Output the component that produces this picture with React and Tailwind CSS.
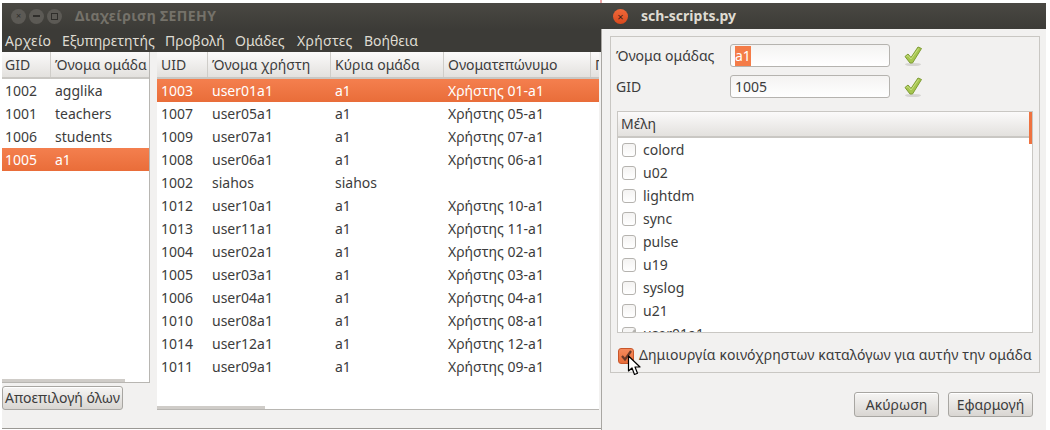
import React from "react";

const menus = [
  ["Αρχείο", "w-[57px] tracking-[0.3px]"],
  ["Εξυπηρετητής", "w-[103px]"],
  ["Προβολή", "w-[70px]"],
  ["Ομάδες", "w-[62px]"],
  ["Χρήστες", "w-[67px] tracking-[0.3px]"],
  ["Βοήθεια", "w-[70px]"],
];

const groups = [
  ["1002", "agglika"],
  ["1001", "teachers"],
  ["1006", "students"],
  ["1005", "a1"],
];

const users = [
  ["1003", "user01a1", "a1", "Χρήστης 01-a1"],
  ["1007", "user05a1", "a1", "Χρήστης 05-a1"],
  ["1009", "user07a1", "a1", "Χρήστης 07-a1"],
  ["1008", "user06a1", "a1", "Χρήστης 06-a1"],
  ["1002", "siahos", "siahos", ""],
  ["1012", "user10a1", "a1", "Χρήστης 10-a1"],
  ["1013", "user11a1", "a1", "Χρήστης 11-a1"],
  ["1004", "user02a1", "a1", "Χρήστης 02-a1"],
  ["1005", "user03a1", "a1", "Χρήστης 03-a1"],
  ["1006", "user04a1", "a1", "Χρήστης 04-a1"],
  ["1010", "user08a1", "a1", "Χρήστης 08-a1"],
  ["1014", "user12a1", "a1", "Χρήστης 12-a1"],
  ["1011", "user09a1", "a1", "Χρήστης 09-a1"],
];

const members = ["colord", "u02", "lightdm", "sync", "pulse", "u19", "syslog", "u21", "user01a1"];

const userCols = ["w-[51px] pl-[4px]", "w-[123px] pl-[4px]", "w-[113px] pl-[4px]", "w-[147px] pl-[4px]", "w-[20px] pl-[4px]"];
const groupCols = ["w-[49px] pl-[3px]", "w-[99px] pl-[4px]"];

const HeaderCell = ({ className, children }) => (
  <div className={`${className} shrink-0 h-full overflow-hidden whitespace-nowrap border-r border-[#cfcdc9] flex items-center`}>
    {children}
  </div>
);

const Header = ({ cols, labels }) => (
  <div className="flex h-[27px] shrink-0 border-b-2 border-[#c9c7c3] bg-gradient-to-b from-[#fbfafa] to-[#e3e1de]">
    {labels.map((label, i) => (
      <HeaderCell key={i} className={cols[i]}>{label}</HeaderCell>
    ))}
  </div>
);

const Row = ({ cols, values, selected }) => (
  <div className={`flex h-[23px] shrink-0 items-center ${selected ? "bg-gradient-to-b from-[#f47f4e] to-[#e96d39] text-white" : ""}`}>
    {values.map((v, i) => (
      <div key={i} className={`${cols[i]} shrink-0 overflow-hidden whitespace-nowrap`}>{v}</div>
    ))}
  </div>
);

const Button = ({ className, children }) => (
  <button className={`${className} flex items-center justify-center rounded-[3px] border border-[#a8a6a2] bg-gradient-to-b from-[#f6f5f4] to-[#d9d6d2] text-[#3c3c3c] shadow-[inset_0_1px_0_#ffffff]`}>
    {children}
  </button>
);

const Check = () => (
  <svg width="20" height="22" viewBox="0 0 20 22" className="ml-[13px] shrink-0">
    <ellipse cx="10" cy="19.5" rx="8" ry="1.6" fill="#d6d5d2" />
    <path d="M2 11.5 L5 9 L8 12.5 L15 2 L18.5 3.5 L9.5 18 L7 18 Z" fill="#a6c64f" stroke="#7f9c34" strokeWidth="1" strokeLinejoin="round" />
    <path d="M3.5 11.5 L5 10.5 L8 14 L15.5 3.5" fill="none" stroke="#cbe184" strokeWidth="1" />
  </svg>
);

const Tick = ({ color }) => (
  <svg width="12" height="12" viewBox="0 0 12 12" className="absolute left-[1px] top-[1px]">
    <path d="M2 6 L5 9.5 L11 1" fill="none" stroke={color} strokeWidth="2.2" />
  </svg>
);

const Field = ({ label, children, className }) => (
  <div className={`flex items-center ${className}`}>
    <div className="-ml-[1px] w-[114px] shrink-0 whitespace-nowrap">{label}</div>
    {children}
    <Check />
  </div>
);

const TextBox = ({ children }) => (
  <div className="flex h-[23px] w-[160px] items-center rounded-[3px] border border-[#b5b3af] bg-gradient-to-b from-[#f4f3f2] to-[#ffffff] pl-[4px]">
    {children}
  </div>
);

export default function App() {
  return (
    <div className="relative flex h-[430px] w-[1050px] overflow-hidden bg-white pl-[2px] pt-[3px] text-[14px] leading-[20px] text-[#3c3c3c] font-['Noto_Sans',sans-serif]">
      <div className="absolute left-[600px] top-0 h-[3px] w-[2px] bg-[#e9a6a6]" />

      {/* main window */}
      <div className="flex h-[426px] w-[599px] shrink-0 flex-col border-b border-[#9a9894] bg-[#f2f1f0]">
        <div className="flex h-[26px] shrink-0 items-center bg-gradient-to-b from-[#4a4843] to-[#3c3b37] pl-[9px]">
          <div className="flex h-[15px] w-[15px] items-center justify-center rounded-full bg-[#5c5a55] text-[9px] text-[#2f2e2b]">×</div>
          <div className="ml-[3px] flex h-[15px] w-[15px] items-center justify-center rounded-full bg-[#5c5a55]">
            <div className="h-[2px] w-[7px] bg-[#2f2e2b]" />
          </div>
          <div className="ml-[3px] flex h-[15px] w-[15px] items-center justify-center rounded-full bg-[#5c5a55]">
            <div className="h-[7px] w-[7px] border border-[#2f2e2b]" />
          </div>
          <div className="ml-[13px] text-[14px] font-bold tracking-[0.4px] text-[#75726a]">Διαχείριση ΣΕΠΕΗΥ</div>
        </div>
        <div className="flex h-[23px] shrink-0 items-center bg-[#3c3b37] pl-[3px] text-[#dfdbd2]">
          {menus.map(([m, w]) => (
            <div key={m} className={`${w} shrink-0 whitespace-nowrap`}>{m}</div>
          ))}
        </div>
        <div className="flex flex-1">
          <div className="flex w-[148px] shrink-0 flex-col">
            <div className="flex h-[331px] flex-col overflow-hidden border-r border-b border-[#b8b6b2] bg-white">
              <Header cols={groupCols} labels={["GID", "Όνομα ομάδα"]} />
              {groups.map((g) => (
                <Row key={g[0]} cols={groupCols} values={g} selected={g[0] === "1005"} />
              ))}
              <div className="mt-auto h-[3px] w-[123px] shrink-0 bg-[#cfccc8]" />
            </div>
            <Button className="mt-[3px] h-[24px] w-[121px] whitespace-nowrap">Αποεπιλογή όλων</Button>
          </div>
          <div className="ml-[7px] flex h-[358px] w-[442px] shrink-0 flex-col overflow-hidden border-b border-[#b8b6b2] bg-white">
            <Header cols={userCols} labels={["UID", "Όνομα χρήστη", "Κύρια ομάδα", "Ονοματεπώνυμο", "Περιγραφή"]} />
            {users.map((u) => (
              <Row key={u[0] + u[1]} cols={userCols} values={u} selected={u[0] === "1003"} />
            ))}
            <div className="mt-auto h-[3px] w-[108px] shrink-0 bg-[#cfccc8]" />
          </div>
        </div>
      </div>

      {/* dialog */}
      <div className="flex h-[427px] w-[445px] shrink-0 flex-col bg-[#f2f1f0] shadow-[inset_1px_0_0_#a9a7a3]">
        <div className="flex h-[26px] shrink-0 items-center bg-gradient-to-b from-[#4a4843] to-[#3c3b37] pl-[12px]">
          <div className="flex h-[15px] w-[15px] items-center justify-center rounded-full bg-gradient-to-b from-[#f0693a] to-[#d8481c] text-[11px] leading-none text-[#3c2018]">×</div>
          <div className="ml-[13px] text-[14px] font-bold text-[#dfdbd2]">sch-scripts.py</div>
        </div>
        <div className="ml-[9px] mt-[7px] flex h-[337px] w-[430px] shrink-0 flex-col border border-[#c9c7c3] pl-[6px] pr-[6px]">
          <Field label="Όνομα ομάδας" className="mt-[7px]">
            <TextBox>
              <span className="bg-[#f47c48] text-white">a1</span>
            </TextBox>
          </Field>
          <Field label="GID" className="mt-[8px]">
            <TextBox>1005</TextBox>
          </Field>
          <div className="mt-[13px] flex h-[222px] flex-col overflow-hidden border border-[#c9c7c3] bg-white">
            <div className="relative flex h-[26px] shrink-0 items-center border-b-2 border-[#c9c7c3] bg-gradient-to-b from-[#fbfafa] to-[#e3e1de] pl-[3px]">
              Μέλη
              <div className="absolute right-0 top-0 h-[32px] w-[3px] bg-[#ee7240]" />
            </div>
            {members.map((m, i) => (
              <div key={m} className="flex h-[23px] shrink-0 items-center pl-[4px]">
                <div className="relative h-[14px] w-[14px] shrink-0 rounded-[3px] border border-[#b5b3af] bg-gradient-to-b from-[#f4f3f2] to-[#ffffff]">
                  {i === members.length - 1 && <Tick color="#b5b3af" />}
                </div>
                <span className="ml-[7px]">{m}</span>
              </div>
            ))}
          </div>
          <div className="mt-[12px] flex items-center pl-[1px] whitespace-nowrap tracking-[0.08px]">
            <div className="relative mt-[1px] h-[16px] w-[16px] shrink-0 rounded-[3px] border border-[#c8562a] bg-gradient-to-b from-[#f58a5c] to-[#e96d39]">
              <Tick color="#6b3a28" />
            </div>
            <span className="ml-[5px]">Δημιουργία κοινόχρηστων καταλόγων για αυτήν την ομάδα</span>
          </div>
        </div>
        <div className="mr-[13px] mt-[19px] flex justify-end gap-[9px]">
          <Button className="h-[25px] w-[85px]">Ακύρωση</Button>
          <Button className="h-[25px] w-[85px]">Εφαρμογή</Button>
        </div>
      </div>

      {/* mouse pointer */}
      <svg width="16" height="22" viewBox="0 0 16 22" className="absolute left-[627px] top-[355px]">
        <path d="M1.5 1 L1.5 16 L5 13 L7.5 19.5 L10.5 18.2 L8 12 L13 12 Z" fill="#ffffff" stroke="#000000" strokeWidth="1.2" strokeLinejoin="round" />
      </svg>
    </div>
  );
}
